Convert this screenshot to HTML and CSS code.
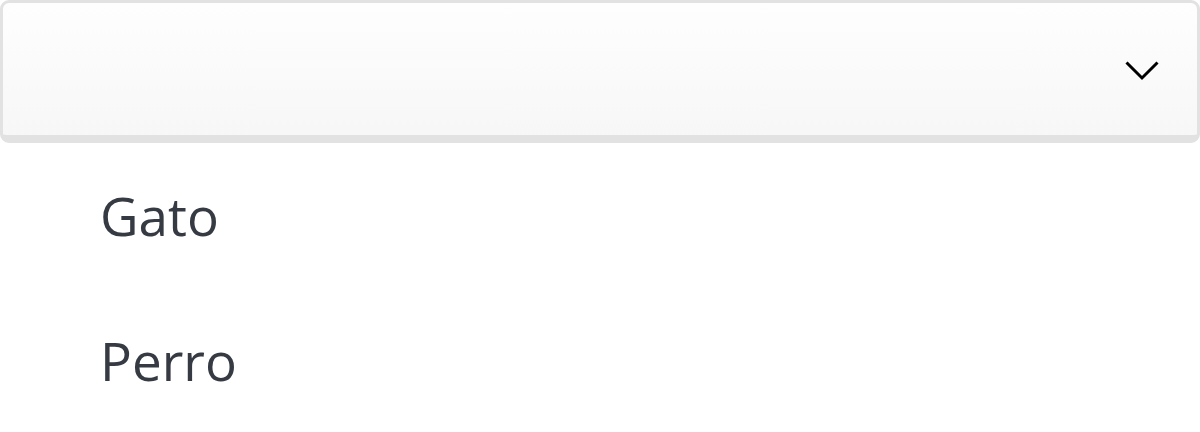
FILE: index.html
```html
<!DOCTYPE html>
<html lang="es">
<head>
    <meta charset="UTF-8">
    <meta name="viewport" content="width=device-width, initial-scale=1.0">
    <title>Select</title>
    <link rel="stylesheet" href="styles.css">
</head>
<body>
    <div class="select">
        <div class="select-trigger">
            <svg class="chevron" xmlns="http://www.w3.org/2000/svg" viewBox="0 0 34 20">
                <path d="M1.5 1.5 L17 17 L32.5 1.5" fill="none" stroke="#000" stroke-width="3"/>
            </svg>
        </div>
        <ul class="options">
            <li class="option">Gato</li>
            <li class="option">Perro</li>
        </ul>
    </div>
</body>
</html>
```

FILE: styles.css
```css
body {
    margin: 0;
    padding: 0;
    background-color: #fff;
    font-family: "Open Sans", "Noto Sans", sans-serif;
}

.select {
    width: 1200px;
}

.select-trigger {
    box-sizing: border-box;
    height: 143px;
    border: 3px solid #e2e2e2;
    border-bottom-width: 8px;
    border-radius: 9px;
    background: linear-gradient(#fefefe, #f7f7f7);
    display: flex;
    align-items: center;
    justify-content: flex-end;
    padding-right: 38px;
    padding-top: 3px;
}

.chevron {
    width: 34px;
    height: 20px;
}

.options {
    list-style: none;
    margin: 0;
    padding: 0;
}

.option {
    height: 145px;
    display: flex;
    align-items: center;
    padding-left: 100px;
    font-size: 53px;
    color: #363a43;
}
```
